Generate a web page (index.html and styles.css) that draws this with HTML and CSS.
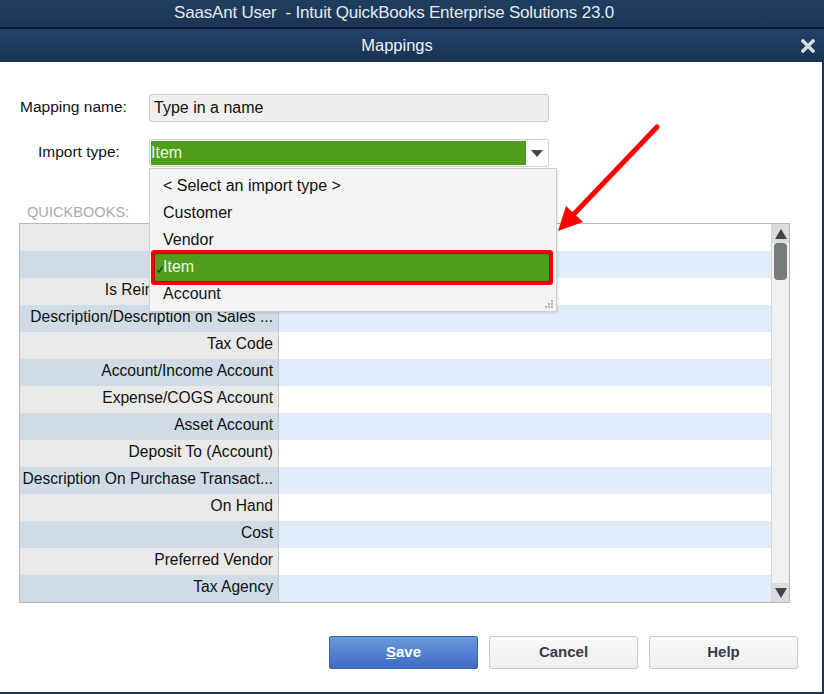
FILE: index.html
```html
<!DOCTYPE html>
<html>
<head>
<meta charset="utf-8">
<link rel="stylesheet" href="styles.css">
</head>
<body>
<div class="window">
  <div class="titlebar">SaasAnt User&nbsp; - Intuit QuickBooks Enterprise Solutions 23.0</div>
  <div class="dialog-head">
    <span class="dialog-title">Mappings</span>
    <svg class="close" width="14" height="14" viewBox="0 0 14 14"><path d="M2 2 L12 12 M12 2 L2 12" stroke="#d8dde3" stroke-width="3.4" stroke-linecap="square"/></svg>
  </div>
  <div class="content">
    <div class="form-row row-name">
      <label class="lbl lbl-name">Mapping name:</label>
      <div class="text-input">Type in a name</div>
    </div>
    <div class="form-row row-type">
      <label class="lbl lbl-type">Import type:</label>
      <div class="select">
        <div class="select-value">Item</div>
        <div class="select-arrow"><svg width="12" height="7" viewBox="0 0 12 7"><path d="M0 0 H12 L6 7 Z" fill="#46404f"/></svg></div>
      </div>
    </div>
    <div class="section-label">QUICKBOOKS:</div>
    <div class="grid-wrap">
      <div class="rows">
        <div class="row"><div class="k">Name</div><div class="v"></div></div>
        <div class="row alt"><div class="k">Type</div><div class="v"></div></div>
        <div class="row"><div class="k">Is Reimbursable Charge</div><div class="v"></div></div>
        <div class="row alt"><div class="k">Description/Description on Sales ...</div><div class="v"></div></div>
        <div class="row"><div class="k">Tax Code</div><div class="v"></div></div>
        <div class="row alt"><div class="k">Account/Income Account</div><div class="v"></div></div>
        <div class="row"><div class="k">Expense/COGS Account</div><div class="v"></div></div>
        <div class="row alt"><div class="k">Asset Account</div><div class="v"></div></div>
        <div class="row"><div class="k">Deposit To (Account)</div><div class="v"></div></div>
        <div class="row alt"><div class="k">Description On Purchase Transact...</div><div class="v"></div></div>
        <div class="row"><div class="k">On Hand</div><div class="v"></div></div>
        <div class="row alt"><div class="k">Cost</div><div class="v"></div></div>
        <div class="row"><div class="k">Preferred Vendor</div><div class="v"></div></div>
        <div class="row alt"><div class="k">Tax Agency</div><div class="v"></div></div>
      </div>
      <div class="scrollbar">
        <div class="sb-btn"><svg width="12" height="10" viewBox="0 0 12 10"><path d="M6 0 L12 10 H0 Z" fill="#46404f"/></svg></div>
        <div class="sb-track"><div class="sb-thumb"></div></div>
        <div class="sb-btn"><svg width="12" height="10" viewBox="0 0 12 10"><path d="M0 0 H12 L6 10 Z" fill="#46404f"/></svg></div>
      </div>
    </div>
    <div class="buttons">
      <button class="btn btn-primary"><u>S</u>ave</button>
      <button class="btn">Cancel</button>
      <button class="btn">Help</button>
    </div>

    <div class="dropdown">
      <div class="opt">&lt; Select an import type &gt;</div>
      <div class="opt">Customer</div>
      <div class="opt">Vendor</div>
      <div class="opt selected"><svg class="check" width="6" height="7" viewBox="0 0 6 7"><path d="M0.5 4 L2 6.2 L5.5 0.5" stroke="#2b2b2b" stroke-width="1.2" fill="none"/></svg>Item</div>
      <div class="opt">Account</div>
      <svg class="grip" width="9" height="9" viewBox="0 0 9 9"><g fill="#b5b5b5"><rect x="7" y="1" width="2" height="2"/><rect x="4" y="4" width="2" height="2"/><rect x="7" y="4" width="2" height="2"/><rect x="1" y="7" width="2" height="2"/><rect x="4" y="7" width="2" height="2"/><rect x="7" y="7" width="2" height="2"/></g></svg>
    </div>

    <svg class="arrow" width="824" height="694" viewBox="0 0 824 694">
      <line x1="657" y1="127" x2="574" y2="214" stroke="#ff0000" stroke-width="5" stroke-linecap="round"/>
      <path d="M558 231 L566 206 L583 222 Z" fill="#ff0000"/>
    </svg>
  </div>
</div>
</body>
</html>
```
FILE: styles.css
```css
* { box-sizing: border-box; }
html, body { margin: 0; padding: 0; background: #ffffff; }
body { font-family: "Liberation Sans", Arial, sans-serif; color: #111; }

.window {
  width: 824px;
  height: 694px;
  display: flex;
  flex-direction: column;
}

.titlebar {
  height: 29px;
  background: linear-gradient(#203e61, #1b3553);
  border-bottom: 2px solid #0c1a33;
  color: #e6e9ee;
  font-size: 17px;
  letter-spacing: -0.2px;
  text-align: center;
  line-height: 26px;
  padding-right: 36px;
}

.dialog-head {
  height: 33px;
  background: linear-gradient(#22416a, #1a3250);
  color: #eef1f5;
  font-size: 16.5px;
  display: flex;
  align-items: center;
  justify-content: center;
  position: relative;
  padding-right: 30px;
}
.dialog-title { padding-bottom: 1px; }
.close { position: absolute; right: 9px; top: 10px; }

.content {
  flex: 1;
  position: relative;
  border-right: 2px solid #1c3452;
  border-bottom: 2px solid #1c3452;
  padding-top: 32px;
}

.form-row { display: flex; align-items: center; font-size: 15.5px; }
.lbl { display: block; padding-bottom: 3px; }
.lbl-name { margin-left: 20px; width: 129px; }
.lbl-type { margin-left: 38px; width: 111px; }
.row-type { margin-top: 17px; }

.text-input {
  width: 400px;
  height: 28px;
  background: #eeeeee;
  border: 1px solid #c9c9c9;
  border-radius: 3px;
  font-size: 16px;
  line-height: 25px;
  padding-left: 4px;
  color: #111;
}

.select {
  width: 400px;
  height: 28px;
  border: 1px solid #cfcfcf;
  border-radius: 2px;
  padding: 1px;
  display: flex;
  background: #fff;
}
.select-value {
  width: 375px;
  background: #4f9e1b;
  color: #eef6e6;
  font-size: 16px;
  line-height: 24px;
}
.select-arrow {
  flex: 1;
  display: flex;
  align-items: center;
  justify-content: center;
  padding-top: 1px;
}

.section-label {
  margin-top: 37px;
  margin-left: 27px;
  font-size: 14.6px;
  color: #a9a9a9;
  height: 19px;
  line-height: 17px;
}

.grid-wrap {
  margin-left: 19px;
  width: 771px;
  height: 380px;
  border: 1px solid #b8b8b8;
  display: flex;
}
.rows { width: 751px; display: flex; flex-direction: column; }
.row { height: 27px; display: flex; font-size: 15.6px; }
.row .k {
  width: 259px;
  background: #e9e9e9;
  border-right: 1px solid #c6c6c6;
  text-align: right;
  padding-right: 5px;
  line-height: 24px;
  white-space: nowrap;
  overflow: hidden;
}
.row .v { flex: 1; background: #ffffff; }
.row.alt .k { background: #cfdbe7; }
.row.alt .v { background: #e1ecfb; }

.scrollbar {
  width: 18px;
  background: #f0f0f0;
  border-left: 1px solid #d6d6d6;
  display: flex;
  flex-direction: column;
}
.sb-btn {
  height: 19px;
  background: #dcdcdc;
  display: flex;
  align-items: center;
  justify-content: center;
}
.sb-track { flex: 1; padding: 0 2px; }
.sb-thumb {
  height: 37px;
  background: #777c7c;
  border-radius: 4px;
}

.buttons {
  display: flex;
  gap: 11px;
  margin-top: 33px;
  margin-left: 329px;
}
.btn {
  width: 149px;
  height: 33px;
  border: 1px solid #c9c9c9;
  border-radius: 2px;
  background: linear-gradient(#fafafa, #eeeeee);
  font-family: "Liberation Sans", Arial, sans-serif;
  font-weight: bold;
  font-size: 15px;
  color: #3a3a44;
  padding: 0 0 2px 0;
}
.btn-primary {
  background: linear-gradient(#6a98da, #3e6bc4);
  border-color: #3a63a8;
  color: #ffffff;
}

.dropdown {
  position: absolute;
  left: 149px;
  top: 106px;
  width: 408px;
  height: 144px;
  background: #f4f4f4;
  border: 1px solid #cfcfcf;
  box-shadow: 1px 1px 2px rgba(0,0,0,0.12);
  padding-top: 4px;
  font-size: 16px;
}
.opt {
  height: 27px;
  line-height: 26px;
  padding-left: 13px;
  color: #111;
  position: relative;
}
.opt.selected {
  margin: 0 7px 0 5px;
  padding-left: 8px;
  background: #4f9e1b;
  color: #eef6e6;
  box-shadow: 0 0 0 1px #c40000, 0 0 0 4px #ff0000;
  border-radius: 1px;
}
.check { position: absolute; left: 2px; top: 12px; }
.grip { position: absolute; right: 3px; bottom: 3px; }

.arrow { position: absolute; left: 0; top: -62px; pointer-events: none; }
```
